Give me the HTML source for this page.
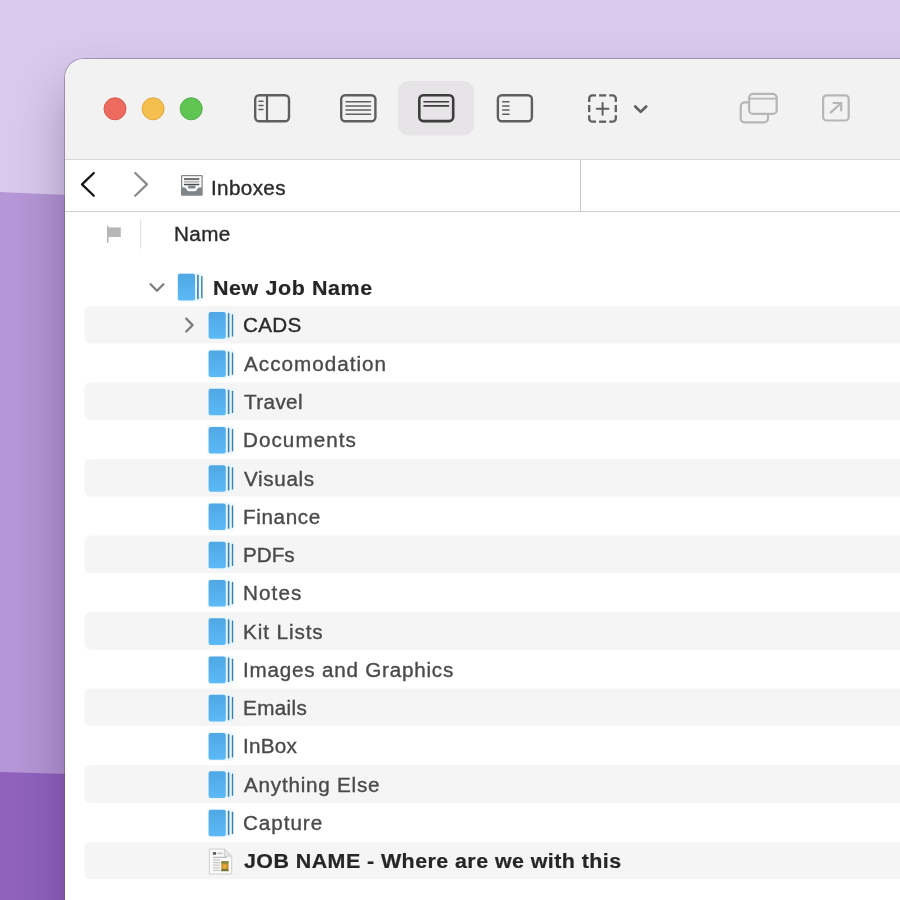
<!DOCTYPE html>
<html><head><meta charset="utf-8">
<style>
html,body{margin:0;padding:0}
body{width:900px;height:900px;overflow:hidden;position:relative;background:#d9caec;font-family:"Liberation Sans",sans-serif;}
#bg{position:absolute;left:0;top:0;width:900px;height:900px}
#win{position:absolute;left:65px;top:59px;width:900px;height:900px;background:#fff;border-top-left-radius:19px;box-shadow:0 0 0 1px rgba(95,80,115,.42),0 28px 50px 0 rgba(30,5,55,.30);overflow:hidden}
#tb{position:absolute;left:0;top:0;width:900px;height:100px;background:#f3f2f3;border-bottom:1px solid #d9d8d9}
#pb{position:absolute;left:0;top:101px;width:900px;height:51px;background:#fff;border-bottom:1px solid #cdcdcd}
#pbdiv{position:absolute;left:515px;top:101px;width:1px;height:51px;background:#c6c6c6}
#ov{position:absolute;left:0;top:0;width:900px;height:900px;overflow:visible}
.t{position:absolute;white-space:nowrap;line-height:1;transform-origin:0 0;transform:scaleX(1.06);will-change:transform}
.stripe{position:absolute;left:19.5px;width:900px;height:38px;background:#f4f4f4;border-radius:7px}
.lbl{font-size:19.5px;color:#4a4a4a;-webkit-text-stroke:.35px #4a4a4a}
.lbl.d{color:#2b2b2b;-webkit-text-stroke:.35px #2b2b2b}
.lbl.b{font-weight:bold;color:#262626;-webkit-text-stroke:.2px #262626;transform:scaleX(1.1)}
</style></head><body>
<svg id="bg" viewBox="0 0 900 900">
<path d="M0 192 L66 195 L66 900 L0 900Z" fill="#b596d6"/>
<path d="M0 772 L66 774 L66 900 L0 900Z" fill="#9062be"/>
</svg>
<div id="win">
<div id="tb"></div>
<div id="pb"></div><div id="pbdiv"></div>

</div>
<svg id="ov" viewBox="0 0 900 900">
<defs>
<linearGradient id="fg" x1="0" x2="0" y1="0" y2="1"><stop offset="0" stop-color="#4fa7e3"/><stop offset="1" stop-color="#5cbaf7"/></linearGradient>
</defs>
<!-- traffic lights -->
<circle cx="115" cy="108.8" r="11" fill="#ed6a5e" stroke="#dc5a4e" stroke-width="1"/>
<circle cx="153.1" cy="108.8" r="11" fill="#f5bf4f" stroke="#e0a93b" stroke-width="1"/>
<circle cx="191.2" cy="108.8" r="11" fill="#61c554" stroke="#52ad45" stroke-width="1"/>
<!-- toolbar icons -->
<g fill="none" stroke="#5f5f5f" stroke-linecap="round" stroke-linejoin="round">
<rect x="255.2" y="95.2" width="33.8" height="26" rx="4" stroke-width="2.4"/>
<path d="M267 95 V121.4" stroke-width="2.2"/>
<path d="M259 101.2 H263 M259 105.4 H263 M259 109.6 H263" stroke-width="1.5"/>
<rect x="341.2" y="95.2" width="34.2" height="26" rx="4" stroke-width="2.4"/>
<path d="M346 101.7 H370.5 M346 105.9 H370.5 M346 110.1 H370.5 M346 114.3 H370.5" stroke-width="1.5"/>
</g>
<rect x="398" y="81" width="76" height="54.5" rx="10" fill="#e6e4e6"/>
<g fill="none" stroke="#3d3d3d" stroke-linecap="round" stroke-linejoin="round">
<rect x="419.3" y="95.3" width="33.9" height="25.8" rx="4" stroke-width="2.6"/>
<path d="M424 101.7 H448.5 M424 105.9 H448.5" stroke-width="1.6"/>
</g>
<g fill="none" stroke="#5f5f5f" stroke-linecap="round" stroke-linejoin="round">
<rect x="497.9" y="95.2" width="34" height="26" rx="4" stroke-width="2.4"/>
<path d="M502.7 101.7 H509 M502.7 105.9 H509 M502.7 110.1 H509 M502.7 114.3 H509" stroke-width="1.5"/>
<!-- dashed add -->
<g stroke-width="2.3" stroke-linecap="butt">
<path d="M589.2 101.9 V98.6 A3.2 3.2 0 0 1 592.4 95.4 H596"/>
<path d="M599.1 95.4 H606.2"/>
<path d="M609.3 95.4 H612.6 A3.2 3.2 0 0 1 615.8 98.6 V101.9"/>
<path d="M615.8 105 V112.1"/>
<path d="M615.8 115.2 V118.5 A3.2 3.2 0 0 1 612.6 121.7 H609.3"/>
<path d="M606.2 121.7 H599.1"/>
<path d="M596 121.7 H592.4 A3.2 3.2 0 0 1 589.2 118.5 V115.2"/>
<path d="M589.2 112.1 V105"/>
</g>
<path d="M596.8 108.8 H608.4 M602.6 102.9 V114.7" stroke-width="2"/>
<path d="M635.2 106.5 L640.7 111.9 L646.2 106.5" stroke-width="2.7"/>
</g>
<g fill="none" stroke="#b6b6b6" stroke-width="2.2" stroke-linecap="round" stroke-linejoin="round">
<path d="M748 102.4 H744.7 A4 4 0 0 0 740.7 106.4 V118.3 A4 4 0 0 0 744.7 122.3 H764 A4 4 0 0 0 768 118.3 V115"/>
<rect x="749.1" y="93.9" width="27.6" height="20" rx="4"/>
<path d="M749.5 98.6 H776.5" stroke-width="1.8"/>
<rect x="823.1" y="95.3" width="25.6" height="25.2" rx="3.6"/>
<path d="M830.6 112.6 L841.2 103 M833.6 103 H841.2 V110.4"/>
</g>
<!-- path bar -->
<path d="M93.8 173 L82 184.4 L93.8 195.8" fill="none" stroke="#111" stroke-width="2.2" stroke-linecap="round" stroke-linejoin="round"/>
<path d="M135.2 173 L147 184.4 L135.2 195.8" fill="none" stroke="#8b8b8b" stroke-width="2.2" stroke-linecap="round" stroke-linejoin="round"/>
<!-- inbox icon -->
<g>
<rect x="181" y="175" width="21.7" height="20.8" rx="1.3" fill="#7f8588"/>
<rect x="182.2" y="176.2" width="19.3" height="11.2" fill="#fafafa"/>
<path d="M184 179 H199.3 M184 184.7 H199.3" stroke="#4a4a4a" stroke-width="1.3"/>
<path d="M184 181.3 H199.3 M184 182.9 H199.3" stroke="#9a9a9a" stroke-width=".8"/>
<path d="M184.4 186 H199.2 V187.4 Q198.2 187.5 197.6 188.5 L196.5 190.2 Q195.9 191.2 194.7 191.2 H188.9 Q187.7 191.2 187.1 190.2 L186 188.5 Q185.4 187.5 184.4 187.4Z" fill="#fafafa"/>
<rect x="188.1" y="185.6" width="7.4" height="2.9" rx=".9" fill="#7f8588"/>
</g>
<!-- header -->
<rect x="107" y="225.8" width="1.5" height="17" fill="#b3b3b3"/>
<rect x="108" y="227.4" width="12.8" height="9.6" fill="#b7b7b7"/>
<rect x="140.2" y="219.5" width="1" height="29" fill="#dcdcdc"/>
<g transform="translate(177.90 287.15)">
<rect x="-1" y="-14.3" width="26.3" height="28.6" rx="3" fill="#e6f4fe" opacity=".75"/>
<rect x="0" y="-13.3" width="17.2" height="26.6" rx="2.2" fill="url(#fg)"/>
<rect x="19.2" y="-12.3" width="1.6" height="24.4" rx=".5" fill="#3581b4"/>
<rect x="23.2" y="-11.2" width="1.4" height="22.2" rx=".5" fill="#3581b4"/>
</g>
<path d="M150.6 284.20 L157 290.70 L163.4 284.20" fill="none" stroke="#7e7e7e" stroke-width="2.3" stroke-linecap="round" stroke-linejoin="round"/>
<rect x="84.3" y="305.92" width="830" height="37.6" rx="6.5" fill="#f5f5f5"/>
<g transform="translate(208.60 325.42)">
<rect x="-1" y="-14.3" width="26.3" height="28.6" rx="3" fill="#e6f4fe" opacity=".75"/>
<rect x="0" y="-13.3" width="17.2" height="26.6" rx="2.2" fill="url(#fg)"/>
<rect x="19.2" y="-12.3" width="1.6" height="24.4" rx=".5" fill="#3581b4"/>
<rect x="23.2" y="-11.2" width="1.4" height="22.2" rx=".5" fill="#3581b4"/>
</g>
<path d="M186.2 318.67 L192.6 325.07 L186.2 331.47" fill="none" stroke="#7e7e7e" stroke-width="2.3" stroke-linecap="round" stroke-linejoin="round"/>
<g transform="translate(208.60 363.69)">
<rect x="-1" y="-14.3" width="26.3" height="28.6" rx="3" fill="#e6f4fe" opacity=".75"/>
<rect x="0" y="-13.3" width="17.2" height="26.6" rx="2.2" fill="url(#fg)"/>
<rect x="19.2" y="-12.3" width="1.6" height="24.4" rx=".5" fill="#3581b4"/>
<rect x="23.2" y="-11.2" width="1.4" height="22.2" rx=".5" fill="#3581b4"/>
</g>
<rect x="84.3" y="382.46" width="830" height="37.6" rx="6.5" fill="#f5f5f5"/>
<g transform="translate(208.60 401.96)">
<rect x="-1" y="-14.3" width="26.3" height="28.6" rx="3" fill="#e6f4fe" opacity=".75"/>
<rect x="0" y="-13.3" width="17.2" height="26.6" rx="2.2" fill="url(#fg)"/>
<rect x="19.2" y="-12.3" width="1.6" height="24.4" rx=".5" fill="#3581b4"/>
<rect x="23.2" y="-11.2" width="1.4" height="22.2" rx=".5" fill="#3581b4"/>
</g>
<g transform="translate(208.60 440.23)">
<rect x="-1" y="-14.3" width="26.3" height="28.6" rx="3" fill="#e6f4fe" opacity=".75"/>
<rect x="0" y="-13.3" width="17.2" height="26.6" rx="2.2" fill="url(#fg)"/>
<rect x="19.2" y="-12.3" width="1.6" height="24.4" rx=".5" fill="#3581b4"/>
<rect x="23.2" y="-11.2" width="1.4" height="22.2" rx=".5" fill="#3581b4"/>
</g>
<rect x="84.3" y="459.00" width="830" height="37.6" rx="6.5" fill="#f5f5f5"/>
<g transform="translate(208.60 478.50)">
<rect x="-1" y="-14.3" width="26.3" height="28.6" rx="3" fill="#e6f4fe" opacity=".75"/>
<rect x="0" y="-13.3" width="17.2" height="26.6" rx="2.2" fill="url(#fg)"/>
<rect x="19.2" y="-12.3" width="1.6" height="24.4" rx=".5" fill="#3581b4"/>
<rect x="23.2" y="-11.2" width="1.4" height="22.2" rx=".5" fill="#3581b4"/>
</g>
<g transform="translate(208.60 516.77)">
<rect x="-1" y="-14.3" width="26.3" height="28.6" rx="3" fill="#e6f4fe" opacity=".75"/>
<rect x="0" y="-13.3" width="17.2" height="26.6" rx="2.2" fill="url(#fg)"/>
<rect x="19.2" y="-12.3" width="1.6" height="24.4" rx=".5" fill="#3581b4"/>
<rect x="23.2" y="-11.2" width="1.4" height="22.2" rx=".5" fill="#3581b4"/>
</g>
<rect x="84.3" y="535.54" width="830" height="37.6" rx="6.5" fill="#f5f5f5"/>
<g transform="translate(208.60 555.04)">
<rect x="-1" y="-14.3" width="26.3" height="28.6" rx="3" fill="#e6f4fe" opacity=".75"/>
<rect x="0" y="-13.3" width="17.2" height="26.6" rx="2.2" fill="url(#fg)"/>
<rect x="19.2" y="-12.3" width="1.6" height="24.4" rx=".5" fill="#3581b4"/>
<rect x="23.2" y="-11.2" width="1.4" height="22.2" rx=".5" fill="#3581b4"/>
</g>
<g transform="translate(208.60 593.31)">
<rect x="-1" y="-14.3" width="26.3" height="28.6" rx="3" fill="#e6f4fe" opacity=".75"/>
<rect x="0" y="-13.3" width="17.2" height="26.6" rx="2.2" fill="url(#fg)"/>
<rect x="19.2" y="-12.3" width="1.6" height="24.4" rx=".5" fill="#3581b4"/>
<rect x="23.2" y="-11.2" width="1.4" height="22.2" rx=".5" fill="#3581b4"/>
</g>
<rect x="84.3" y="612.08" width="830" height="37.6" rx="6.5" fill="#f5f5f5"/>
<g transform="translate(208.60 631.58)">
<rect x="-1" y="-14.3" width="26.3" height="28.6" rx="3" fill="#e6f4fe" opacity=".75"/>
<rect x="0" y="-13.3" width="17.2" height="26.6" rx="2.2" fill="url(#fg)"/>
<rect x="19.2" y="-12.3" width="1.6" height="24.4" rx=".5" fill="#3581b4"/>
<rect x="23.2" y="-11.2" width="1.4" height="22.2" rx=".5" fill="#3581b4"/>
</g>
<g transform="translate(208.60 669.85)">
<rect x="-1" y="-14.3" width="26.3" height="28.6" rx="3" fill="#e6f4fe" opacity=".75"/>
<rect x="0" y="-13.3" width="17.2" height="26.6" rx="2.2" fill="url(#fg)"/>
<rect x="19.2" y="-12.3" width="1.6" height="24.4" rx=".5" fill="#3581b4"/>
<rect x="23.2" y="-11.2" width="1.4" height="22.2" rx=".5" fill="#3581b4"/>
</g>
<rect x="84.3" y="688.62" width="830" height="37.6" rx="6.5" fill="#f5f5f5"/>
<g transform="translate(208.60 708.12)">
<rect x="-1" y="-14.3" width="26.3" height="28.6" rx="3" fill="#e6f4fe" opacity=".75"/>
<rect x="0" y="-13.3" width="17.2" height="26.6" rx="2.2" fill="url(#fg)"/>
<rect x="19.2" y="-12.3" width="1.6" height="24.4" rx=".5" fill="#3581b4"/>
<rect x="23.2" y="-11.2" width="1.4" height="22.2" rx=".5" fill="#3581b4"/>
</g>
<g transform="translate(208.60 746.39)">
<rect x="-1" y="-14.3" width="26.3" height="28.6" rx="3" fill="#e6f4fe" opacity=".75"/>
<rect x="0" y="-13.3" width="17.2" height="26.6" rx="2.2" fill="url(#fg)"/>
<rect x="19.2" y="-12.3" width="1.6" height="24.4" rx=".5" fill="#3581b4"/>
<rect x="23.2" y="-11.2" width="1.4" height="22.2" rx=".5" fill="#3581b4"/>
</g>
<rect x="84.3" y="765.16" width="830" height="37.6" rx="6.5" fill="#f5f5f5"/>
<g transform="translate(208.60 784.66)">
<rect x="-1" y="-14.3" width="26.3" height="28.6" rx="3" fill="#e6f4fe" opacity=".75"/>
<rect x="0" y="-13.3" width="17.2" height="26.6" rx="2.2" fill="url(#fg)"/>
<rect x="19.2" y="-12.3" width="1.6" height="24.4" rx=".5" fill="#3581b4"/>
<rect x="23.2" y="-11.2" width="1.4" height="22.2" rx=".5" fill="#3581b4"/>
</g>
<g transform="translate(208.60 822.93)">
<rect x="-1" y="-14.3" width="26.3" height="28.6" rx="3" fill="#e6f4fe" opacity=".75"/>
<rect x="0" y="-13.3" width="17.2" height="26.6" rx="2.2" fill="url(#fg)"/>
<rect x="19.2" y="-12.3" width="1.6" height="24.4" rx=".5" fill="#3581b4"/>
<rect x="23.2" y="-11.2" width="1.4" height="22.2" rx=".5" fill="#3581b4"/>
</g>
<rect x="84.3" y="841.70" width="830" height="37.6" rx="6.5" fill="#f5f5f5"/>
<g transform="translate(208.9 848.55)"><path d="M.5 .5 H15.5 L22.8 7.8 V25.5 H.5Z" fill="#fbfbfb" stroke="#c9c9c9" stroke-width=".9"/>
<path d="M15.5 .5 V7.8 H22.8Z" fill="#e4e4e4" stroke="#c4c4c4" stroke-width=".7"/>
<rect x="4" y="3.6" width="3.2" height="2.6" fill="#555"/>
<rect x="8.4" y="4" width="5.5" height="1.6" fill="#c2c2c2"/>
<rect x="4" y="8.2" width="14" height="1.3" fill="#bdbdbd"/>
<rect x="4" y="10.8" width="7" height="1.3" fill="#c6c6c6"/>
<rect x="4" y="13.4" width="7" height="1.3" fill="#c6c6c6"/>
<rect x="4" y="16" width="7" height="1.3" fill="#c6c6c6"/>
<rect x="4" y="18.6" width="7" height="1.3" fill="#c6c6c6"/>
<rect x="4" y="21.2" width="7" height="1.3" fill="#c6c6c6"/>
<rect x="12.4" y="12.6" width="7.2" height="10" fill="#c98a2c"/>
<rect x="12.4" y="12.6" width="7.2" height="2.6" fill="#8a8f4a"/>
<rect x="14" y="16" width="3.6" height="4" fill="#e0b03a"/>
<rect x="12.4" y="20.6" width="7.2" height="2" fill="#6f7a3a"/></g>
</svg>
<div class="t" id="inb" style="left:210.70px;top:178.5px;font-size:19.5px;color:#2a2a2a;-webkit-text-stroke:.35px #2a2a2a;letter-spacing:0.330px">Inboxes</div>
<div class="t" id="nm" style="left:174.30px;top:225.2px;font-size:19.5px;color:#2a2a2a;-webkit-text-stroke:.35px #2a2a2a;letter-spacing:0.377px">Name</div>
<div class="t lbl b" id="r0" style="left:212.80px;top:278.60px;letter-spacing:0.537px">New Job Name</div>
<div class="t lbl d" id="r1" style="left:243.20px;top:316.47px;letter-spacing:0.252px">CADS</div>
<div class="t lbl" id="r2" style="left:244.20px;top:354.74px;letter-spacing:0.952px">Accomodation</div>
<div class="t lbl" id="r3" style="left:244.20px;top:393.01px;letter-spacing:0.358px">Travel</div>
<div class="t lbl" id="r4" style="left:243.20px;top:431.28px;letter-spacing:0.979px">Documents</div>
<div class="t lbl" id="r5" style="left:244.20px;top:469.55px;letter-spacing:0.613px">Visuals</div>
<div class="t lbl" id="r6" style="left:243.20px;top:507.82px;letter-spacing:0.582px">Finance</div>
<div class="t lbl" id="r7" style="left:243.20px;top:546.09px;letter-spacing:-0.031px">PDFs</div>
<div class="t lbl" id="r8" style="left:243.20px;top:584.36px;letter-spacing:1.014px">Notes</div>
<div class="t lbl" id="r9" style="left:243.20px;top:622.63px;letter-spacing:0.861px">Kit Lists</div>
<div class="t lbl" id="r10" style="left:243.20px;top:660.90px;letter-spacing:0.723px">Images and Graphics</div>
<div class="t lbl" id="r11" style="left:243.20px;top:699.17px;letter-spacing:0.321px">Emails</div>
<div class="t lbl" id="r12" style="left:243.20px;top:737.44px;letter-spacing:0.259px">InBox</div>
<div class="t lbl" id="r13" style="left:244.20px;top:775.71px;letter-spacing:0.715px">Anything Else</div>
<div class="t lbl" id="r14" style="left:243.20px;top:813.98px;letter-spacing:0.881px">Capture</div>
<div class="t lbl b" id="r15" style="left:243.80px;top:852.25px;letter-spacing:0.386px">JOB NAME - Where are we with this</div>
</body></html>
